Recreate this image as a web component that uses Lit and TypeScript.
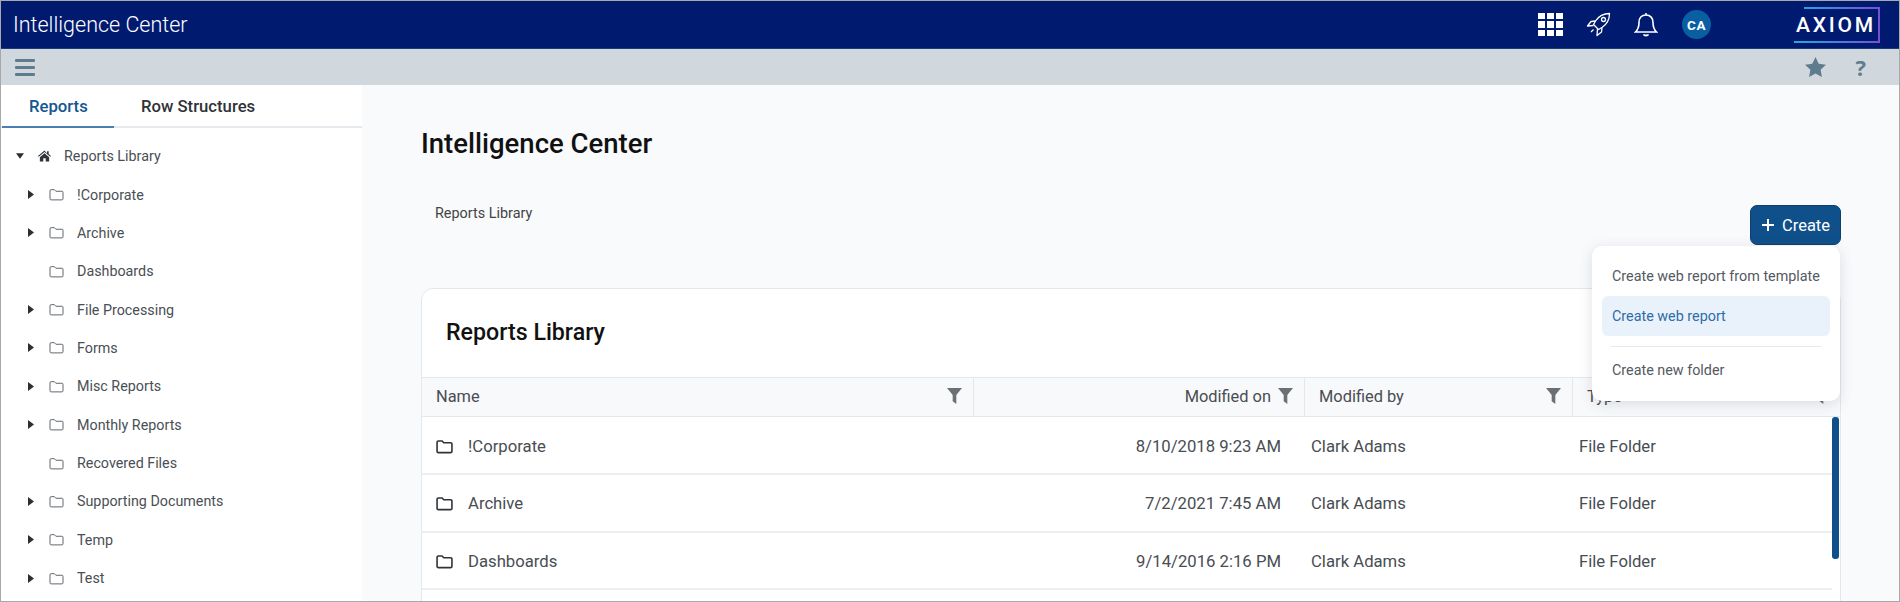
import { LitElement, html, css } from "lit";
import { customElement } from "lit/decorators.js";

const folder = (cls: string) => html`<svg class=${cls} viewBox="0 0 16 14" fill="none" stroke="currentColor"><path d="M1 3a1.2 1.2 0 0 1 1.2-1.2h3.5l1.6 1.7h6.5A1.2 1.2 0 0 1 15 4.700v6.900a1.2 1.2 0 0 1-1.2 1.2H2.200A1.2 1.2 0 0 1 1 11.600z" /></svg>`;
const filter = html`<svg class="filter" viewBox="0 0 14 15"><path d="M0 0h14L8.700 6.600V15L5.300 12.500V6.600z" fill="#6a7076"/></svg>`;

const tree: [string, boolean][] = [
  ["!Corporate", true], ["Archive", true], ["Dashboards", false], ["File Processing", true],
  ["Forms", true], ["Misc Reports", true], ["Monthly Reports", true], ["Recovered Files", false],
  ["Supporting Documents", true], ["Temp", true], ["Test", true],
];
const rows = [
  ["!Corporate", "8/10/2018 9:23 AM"], ["Archive", "7/2/2021 7:45 AM"], ["Dashboards", "9/14/2016 2:16 PM"],
];

@customElement("app-root")
export class AppRoot extends LitElement {
  static styles = css`
    :host { display: block; width: 1900px; height: 602px; overflow: hidden; box-sizing: border-box; border: 1px solid #a9a9a9; font-family: Roboto, "Liberation Sans", sans-serif; color: #3f444a; background: #f9fafc; }
    .top { height: 47px; background: #001a70; border-bottom: 1px solid #1b3a7a; color: #fff; display: flex; align-items: center; padding-left: 12px; font-size: 21.5px; font-weight: 300; }
    .top .title { flex: 1; }
    .top .ic { display: flex; align-items: center; }
    .grid { width: 25px; height: 24px; display: grid; grid-template-columns: repeat(3, 7px); grid-template-rows: repeat(3, 6.670px); gap: 2px; }
    .grid i { background: #fff; display: block; }
    .rocket { width: 26px; height: 26px; margin-left: 22px; }
    .bell { width: 24px; height: 26px; margin-left: 23px; }
    .avatar { width: 29px; height: 29px; border-radius: 50%; background: #0a5fa3; margin-left: 24px; font-size: 13.500px; font-weight: 700; display: flex; align-items: center; justify-content: center; letter-spacing: .5px; }
    .logo { position: relative; width: 86px; height: 36px; margin-left: 83px; margin-right: 19px; font-size: 21px; font-weight: 500; letter-spacing: 2.800px; display: flex; align-items: center; justify-content: flex-end; padding-right: 4px; box-sizing: border-box; }
    .logo svg { position: absolute; inset: 0; width: 100%; height: 100%; }
    .bar { height: 36px; background: #d0d8dd; display: flex; align-items: center; padding: 0 15px 0 14px; }
    .bar .sp { flex: 1; }
    .burger { width: 20px; height: 17px; display: flex; flex-direction: column; justify-content: space-between; }
    .burger i { height: 3px; background: #5f7c8f; border-radius: 1px; display: block; }
    .star { width: 21px; height: 20px; margin-right: 30px; margin-top: -1px; }
    .help { font-size: 22px; font-weight: 700; color: #5f7c8f; margin-right: 18px; font-family: "Open Sans", sans-serif; }
    .body { display: flex; height: 517px; overflow: hidden; }
    .side { width: 361px; background: #fff; flex: none; }
    .tabs { display: flex; height: 43px; border-bottom: 2px solid #e6e9ee; font-size: 16.700px; font-weight: 500; box-sizing: border-box; }
    .tab { padding: 12px 27px 0 27px; box-sizing: border-box; height: 43px; color: #2f3338; }
    .tab.on { color: #14568f; border-bottom: 2px solid #4c7fae; width: 112px; margin-left: 1px; }
    .tree { padding-top: 9px; font-size: 14.300px; }
    .node { display: flex; align-items: center; height: 38.360px; padding-left: 27px; color: #4a4f55; }
    .node.root { padding-left: 15px; }
    .node .arr { width: 6px; height: 9px; margin-right: 15px; flex: none; }
    .node .arr.blank { visibility: hidden; }
    .node.root .arr { width: 8px; height: 6px; margin-right: 14px; }
    .home { width: 13px; height: 12px; margin-right: 13px; color: #2f3338; }
    .tf { width: 15px; height: 13px; margin-right: 13px; color: #555b62; }
    .main { flex: 1; padding: 0 0 0 59px; position: relative; min-width: 0; }
    h1 { font-size: 27.500px; font-weight: 500; color: #111; margin: 43px 0 0 0; line-height: 32px; }
    .crumbrow { display: flex; justify-content: space-between; align-items: flex-start; margin-top: 45px; padding-right: 58px; height: 83px; }
    .crumb { font-size: 14.400px; padding: 0 0 0 14px; color: #444; }
    .create { width: 91px; height: 40px; box-sizing: border-box; background: #10508a; border: 1px solid #0c3f70; border-radius: 7px; color: #fff; font-size: 16.500px; display: flex; align-items: center; justify-content: center; gap: 7px; font-family: inherit; padding: 0; }
    .create svg { width: 14px; height: 14px; }
    .menu { position: absolute; left: 1230px; top: 161px; width: 248px; height: 155px; background: #fff; border-radius: 10px; box-shadow: 0 3px 14px rgba(60,70,90,.16); box-sizing: border-box; padding: 10px 10px 0 10px; font-size: 14.350px; color: #55595f; z-index: 5; }
    .mi { height: 40px; line-height: 42px; padding-left: 10px; border-radius: 6px; }
    .mi.on { background: #e9f2fb; color: #2f6ba6; }
    .menu hr { border: 0; border-top: 1px solid #e6e8ec; margin: 10px 9px 0; }
    .mi.last { margin-top: 3px; }
    .card { width: 1420px; background: #fff; border: 1px solid #e4e7ec; border-radius: 12px 12px 0 0; box-sizing: border-box; height: 400px; }
    .card h2 { margin: 0; height: 88px; line-height: 86px; padding-left: 24px; font-size: 23.200px; font-weight: 500; color: #111; }
    .thead { display: grid; grid-template-columns: 552px 331px 268px 1fr; height: 40px; background: #f8f9fb; border-top: 1px solid #e4e7ec; border-bottom: 1px solid #e4e7ec; font-size: 16.400px; box-sizing: border-box; color: #484d53; }
    .th { display: flex; align-items: center; padding: 0 11px 2px 14px; border-right: 1px solid #e4e7ec; gap: 7px; }
    .th.r { justify-content: flex-end; }
    .th .name { flex: 1; }
    .th.r .name { flex: none; }
    .th:last-child { border-right: 0; }
    .filter { width: 15px; height: 16px; flex: none; }
    .tbody { position: relative; margin-right: 8px; padding-top: .5px; }
    .tr { display: grid; grid-template-columns: 552px 307px 267px 1fr; height: 57.500px; box-sizing: border-box; border-bottom: 2px solid #eceef1; padding-top: 1.500px; font-size: 16.700px; align-items: center; color: #484d53; }
    .cname { display: flex; align-items: center; padding-left: 14px; gap: 15px; color: #484d53; }
    .rf { width: 17px; height: 15px; color: #2f3338; stroke-width: 1.500; flex: none; }
    .date { text-align: right; }
    .by { padding-left: 30px; }
    .type { padding-left: 31px; }
    .thumb { position: absolute; right: -7px; top: 0; width: 7px; height: 142px; background: #10508a; border-radius: 3px; }
  `;
  render() {
    const arrowRight = html`<svg class="arr" viewBox="0 0 6 9"><path d="M0 0l6 4.500-6 4.500z" fill="#2b2f33"/></svg>`;
    return html`
      <div class="top">
        <div class="title">Intelligence Center</div>
        <div class="ic">
          <div class="grid">${Array.from({ length: 9 }, () => html`<i></i>`)}</div>
          <svg class="rocket" viewBox="0 0 26 26" fill="none" stroke="#fff" stroke-width="1.300" stroke-linejoin="round"><path d="M24.500 1.500C18 1.500 13.500 4.500 10.500 9L8.500 12.500 13.500 17.500 17 15.500C21.500 12.500 24.500 8 24.500 1.500z"/><circle cx="18.500" cy="7.500" r="2"/><path d="M10.500 9L6 9.500 2.500 14 8.500 13.500M17 15.500L16.500 20 12 23.500 12.500 17M8.500 17.500L6 20"/></svg>
          <svg class="bell" viewBox="0 0 24 26" fill="none" stroke="#fff" stroke-width="1.600"><path d="M12 3c-4.500 0-7 3.200-7 7.500 0 5-1.500 7.500-3.500 9.500h21c-2-2-3.500-4.500-3.500-9.500C19 6.200 16.500 3 12 3zM12 1v2"/><path d="M9.500 22.500c.8 1.600 4.200 1.600 5 0" fill="#fff"/></svg>
          <div class="avatar">CA</div>
          <div class="logo">
            <svg viewBox="0 0 86 36" fill="none" stroke-width="2"><defs><linearGradient id="g1" gradientUnits="userSpaceOnUse" x1="0" y1="0" x2="86" y2="0"><stop offset="0" stop-color="#25a9e0"/><stop offset="1" stop-color="#7a4fd0"/></linearGradient></defs><path d="M0 35h85V1H10" stroke="url(#g1)"/></svg>
            AXIOM
          </div>
        </div>
      </div>
      <div class="bar">
        <div class="burger"><i></i><i></i><i></i></div>
        <div class="sp"></div>
        <svg class="star" viewBox="0 0 24 23"><path d="M12 0l3.700 7.700 8.300 1.100-6.100 5.800 1.500 8.400L12 19l-7.400 4 1.500-8.400L0 8.800l8.300-1.100z" fill="#5f7c8f"/></svg>
        <div class="help">?</div>
      </div>
      <div class="body">
        <div class="side">
          <div class="tabs"><div class="tab on">Reports</div><div class="tab">Row Structures</div></div>
          <div class="tree">
            <div class="node root">
              <svg class="arr" viewBox="0 0 9 6"><path d="M0 0h9L4.500 6z" fill="#2b2f33"/></svg>
              <svg class="home" viewBox="0 0 14 12"><path d="M7 0L0 6l.8.9L7 1.700l6.200 5.200.8-.9-2.500-2.100V1h-1.800v2.200zM2 7.300V12h3.700V8.500h2.600V12H12V7.300L7 3z" fill="currentColor"/></svg>
              Reports Library
            </div>
            ${tree.map(([n, a]) => html`<div class="node">
              ${a ? arrowRight : html`<span class="arr blank"></span>`}
              ${folder("tf")}${n}
            </div>`)}
          </div>
        </div>
        <div class="main">
          <h1>Intelligence Center</h1>
          <div class="crumbrow">
            <div class="crumb">Reports Library</div>
            <button class="create"><svg viewBox="0 0 14 14"><path d="M7 1v12M1 7h12" stroke="#fff" stroke-width="2"/></svg>Create</button>
          </div>
          <div class="menu">
            <div class="mi">Create web report from template</div>
            <div class="mi on">Create web report</div>
            <hr />
            <div class="mi last">Create new folder</div>
          </div>
          <div class="card">
            <h2>Reports Library</h2>
            <div class="thead">
              <div class="th"><span class="name">Name</span>${filter}</div>
              <div class="th r"><span class="name">Modified on</span>${filter}</div>
              <div class="th"><span class="name">Modified by</span>${filter}</div>
              <div class="th"><span class="name">Type</span>${filter}</div>
            </div>
            <div class="tbody">
              <div class="thumb"></div>
              ${rows.map(([n, d]) => html`<div class="tr">
                <div class="cname">${folder("rf")}${n}</div>
                <div class="date">${d}</div>
                <div class="by">Clark Adams</div>
                <div class="type">File Folder</div>
              </div>`)}
              <div class="tr"></div>
            </div>
          </div>
        </div>
      </div>
    `;
  }
}
